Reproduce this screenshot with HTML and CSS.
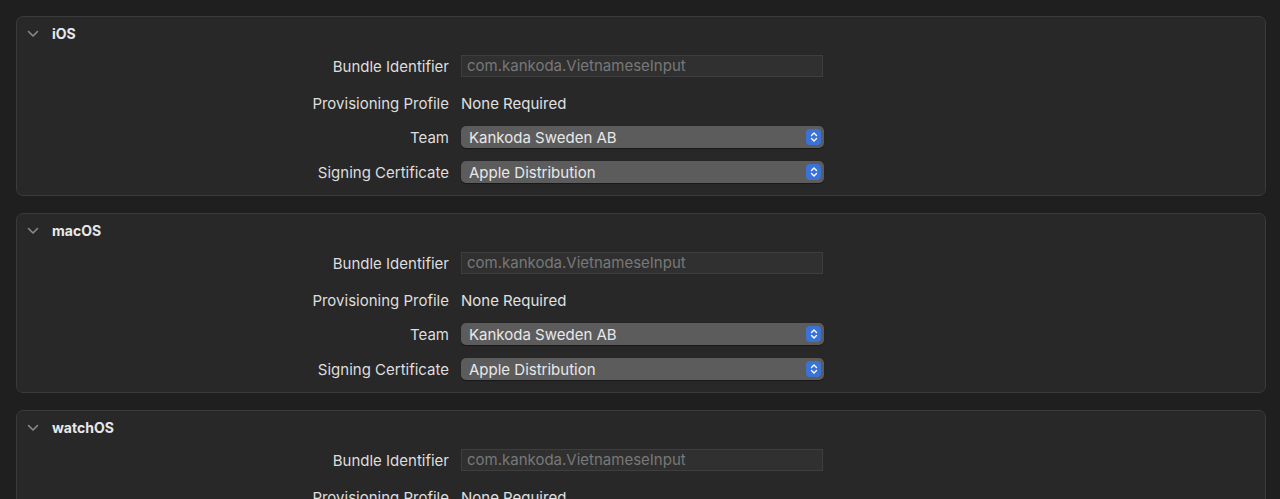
FILE: index.html
```html
<!DOCTYPE html>
<html>
<head>
<meta charset="utf-8">
<link rel="stylesheet" href="styles.css">
</head>
<body>
<div class="page">
  <section class="panel">
    <div class="head"><svg class="chev" width="12" height="8" viewBox="0 0 12 8"><path d="M1.5 1.5 L6 6 L10.5 1.5" fill="none" stroke="#8a8a8a" stroke-width="1.6" stroke-linecap="round" stroke-linejoin="round"/></svg><span class="title">iOS</span></div>
    <div class="rows">
      <div class="row r-bundle"><span class="label">Bundle Identifier</span><div class="field">com.kankoda.VietnameseInput</div></div>
      <div class="row r-prov"><span class="label">Provisioning Profile</span><span class="value">None Required</span></div>
      <div class="row r-team"><span class="label">Team</span><div class="popup"><span>Kankoda Sweden AB</span><span class="step"><svg width="8" height="12" viewBox="0 0 8 12"><path d="M1.5 4.5 L4 2 L6.5 4.5 M1.5 7.5 L4 10 L6.5 7.5" fill="none" stroke="#fff" stroke-width="1.4" stroke-linecap="round" stroke-linejoin="round"/></svg></span></div></div>
      <div class="row r-sign"><span class="label">Signing Certificate</span><div class="popup"><span>Apple Distribution</span><span class="step"><svg width="8" height="12" viewBox="0 0 8 12"><path d="M1.5 4.5 L4 2 L6.5 4.5 M1.5 7.5 L4 10 L6.5 7.5" fill="none" stroke="#fff" stroke-width="1.4" stroke-linecap="round" stroke-linejoin="round"/></svg></span></div></div>
    </div>
  </section>
  <section class="panel">
    <div class="head"><svg class="chev" width="12" height="8" viewBox="0 0 12 8"><path d="M1.5 1.5 L6 6 L10.5 1.5" fill="none" stroke="#8a8a8a" stroke-width="1.6" stroke-linecap="round" stroke-linejoin="round"/></svg><span class="title">macOS</span></div>
    <div class="rows">
      <div class="row r-bundle"><span class="label">Bundle Identifier</span><div class="field">com.kankoda.VietnameseInput</div></div>
      <div class="row r-prov"><span class="label">Provisioning Profile</span><span class="value">None Required</span></div>
      <div class="row r-team"><span class="label">Team</span><div class="popup"><span>Kankoda Sweden AB</span><span class="step"><svg width="8" height="12" viewBox="0 0 8 12"><path d="M1.5 4.5 L4 2 L6.5 4.5 M1.5 7.5 L4 10 L6.5 7.5" fill="none" stroke="#fff" stroke-width="1.4" stroke-linecap="round" stroke-linejoin="round"/></svg></span></div></div>
      <div class="row r-sign"><span class="label">Signing Certificate</span><div class="popup"><span>Apple Distribution</span><span class="step"><svg width="8" height="12" viewBox="0 0 8 12"><path d="M1.5 4.5 L4 2 L6.5 4.5 M1.5 7.5 L4 10 L6.5 7.5" fill="none" stroke="#fff" stroke-width="1.4" stroke-linecap="round" stroke-linejoin="round"/></svg></span></div></div>
    </div>
  </section>
  <section class="panel">
    <div class="head"><svg class="chev" width="12" height="8" viewBox="0 0 12 8"><path d="M1.5 1.5 L6 6 L10.5 1.5" fill="none" stroke="#8a8a8a" stroke-width="1.6" stroke-linecap="round" stroke-linejoin="round"/></svg><span class="title">watchOS</span></div>
    <div class="rows">
      <div class="row r-bundle"><span class="label">Bundle Identifier</span><div class="field">com.kankoda.VietnameseInput</div></div>
      <div class="row r-prov"><span class="label">Provisioning Profile</span><span class="value">None Required</span></div>
      <div class="row r-team"><span class="label">Team</span><div class="popup"><span>Kankoda Sweden AB</span><span class="step"><svg width="8" height="12" viewBox="0 0 8 12"><path d="M1.5 4.5 L4 2 L6.5 4.5 M1.5 7.5 L4 10 L6.5 7.5" fill="none" stroke="#fff" stroke-width="1.4" stroke-linecap="round" stroke-linejoin="round"/></svg></span></div></div>
      <div class="row r-sign"><span class="label">Signing Certificate</span><div class="popup"><span>Apple Distribution</span><span class="step"><svg width="8" height="12" viewBox="0 0 8 12"><path d="M1.5 4.5 L4 2 L6.5 4.5 M1.5 7.5 L4 10 L6.5 7.5" fill="none" stroke="#fff" stroke-width="1.4" stroke-linecap="round" stroke-linejoin="round"/></svg></span></div></div>
    </div>
  </section>
</div>
</body>
</html>
```
FILE: styles.css
```css
html, body {
  margin: 0;
  padding: 0;
  background: #1f1f1f;
  height: 499px;
  overflow: hidden;
}
.page {
  padding: 16px 14px 0 16px;
  display: flex;
  flex-direction: column;
  gap: 17px;
  font-family: Inter, "Liberation Sans", sans-serif;
  font-size: 15px;
  color: #dedede;
}
.panel {
  height: 180px;
  box-sizing: border-box;
  border: 1px solid #3a3a3a;
  border-radius: 7px;
  background: #282828;
  flex-shrink: 0;
}
.head {
  height: 32px;
  display: flex;
  align-items: center;
  padding-left: 10px;
}
.chev { margin-right: 13px; margin-top: 1px; }
.title {
  font-weight: 700;
  font-size: 14px;
  color: #e8e8e8;
}
.rows {
  display: flex;
  flex-direction: column;
}
.row {
  display: flex;
  align-items: center;
  height: 22px;
}
.r-bundle { margin-top: 6px; }
.r-prov { margin-top: 15px; }
.r-team { margin-top: 12px; }
.r-sign { margin-top: 13px; }
.label {
  width: 444px;
  text-align: right;
  padding-right: 12px;
  box-sizing: border-box;
  white-space: nowrap;
}
.value { color: #e0e0e0; }
.field {
  width: 362px;
  height: 22px;
  box-sizing: border-box;
  background: #303030;
  border: 1px solid #3e3e3e;
  color: #787878;
  padding-left: 5px;
  line-height: 20px;
  white-space: nowrap;
}
.popup {
  width: 363px;
  height: 22px;
  box-sizing: border-box;
  background: #5c5c5c;
  border-radius: 5px;
  color: #e8e8e8;
  display: flex;
  align-items: center;
  justify-content: space-between;
  padding-left: 8px;
  padding-right: 3px;
  box-shadow: 0 0.5px 1px rgba(0,0,0,0.4);
}
.step {
  width: 15px;
  height: 16px;
  border-radius: 4px;
  background: #3b72d8;
  display: flex;
  align-items: center;
  justify-content: center;
}
```
